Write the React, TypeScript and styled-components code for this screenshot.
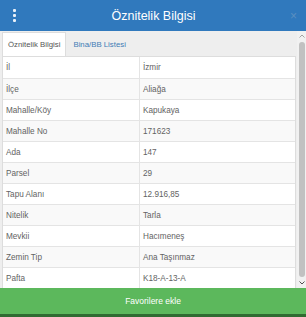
import React from "react";
import styled, { createGlobalStyle } from "styled-components";

const GlobalStyle = createGlobalStyle`
  html, body {
    margin: 0;
    padding: 0;
    background: #ffffff;
    font-family: "Liberation Sans", Arial, sans-serif;
  }
`;

const Panel = styled.div`
  width: 306px;
  height: 317px;
  display: flex;
  flex-direction: column;
  overflow: hidden;
  background: #ffffff;
`;

const Header = styled.div`
  height: 31px;
  flex: none;
  background: #3079bd;
  display: flex;
  align-items: center;
  justify-content: space-between;
  padding: 0 9px 0 11px;
  color: #ffffff;
`;

const MenuDots = styled.div`
  display: flex;
  flex-direction: column;
  gap: 2px;
  width: 6px;
  align-items: center;
  span {
    width: 3px;
    height: 3px;
    border-radius: 1px;
    background: #e9f1f9;
  }
`;

const Title = styled.div`
  font-size: 12.5px;
  color: #ffffff;
`;

const Close = styled.div`
  font-size: 12px;
  color: #5b8fc0;
  line-height: 1;
`;

const Body = styled.div`
  flex: 1;
  display: flex;
  min-height: 0;
`;

const Content = styled.div`
  flex: 1;
  display: flex;
  flex-direction: column;
  background: #eeeeee;
`;

const Tabs = styled.div`
  height: 25px;
  flex: none;
  display: flex;
  align-items: flex-end;
  padding-left: 2px;
`;

const Tab = styled.div<{ $active?: boolean }>`
  height: 23px;
  display: flex;
  align-items: center;
  padding: 0 5px;
  font-size: 7.8px;
  color: ${(p) => (p.$active ? "#555555" : "#3f7cb5")};
  background: ${(p) => (p.$active ? "#ffffff" : "transparent")};
  border: 1px solid ${(p) => (p.$active ? "#dddddd" : "transparent")};
  border-bottom: none;
  margin-right: 1px;
`;

const Table = styled.div`
  flex: 1;
  margin: 0 1px 0 2px;
  border: 1px solid #dddddd;
  border-bottom: none;
  background: #ffffff;
  display: flex;
  flex-direction: column;
`;

const Row = styled.div<{ $striped: boolean }>`
  display: grid;
  grid-template-columns: 136px 1fr;
  height: 21px;
  flex: none;
  background: ${(p) => (p.$striped ? "#f9f9f9" : "#ffffff")};
  border-top: 1px solid #e4e4e4;
  box-sizing: border-box;
  &:first-child {
    border-top: none;
  }
`;

const Cell = styled.div`
  display: flex;
  align-items: center;
  padding-left: 3px;
  font-size: 8.2px;
  color: #636363;
  & + & {
    border-left: 1px solid #e4e4e4;
  }
`;

const Scroll = styled.div`
  width: 9px;
  flex: none;
  background: #f1f1f1;
  display: flex;
  flex-direction: column;
  align-items: center;
  padding: 1px 0;
  box-sizing: border-box;
`;

const Arrow = styled.div`
  height: 8px;
  display: flex;
  align-items: center;
  justify-content: center;
  flex: none;
`;

const Thumb = styled.div`
  flex: 1;
  width: 6px;
  margin: 2px 0;
  background: #c1c1c1;
  border-radius: 3px;
`;

const Footer = styled.button`
  height: 29px;
  flex: none;
  border: none;
  border-bottom: 3px solid #2f6b31;
  background: #5cb85c;
  color: #ffffff;
  font-family: "Liberation Sans", Arial, sans-serif;
  font-size: 8.5px;
  padding: 0;
  width: 100%;
  cursor: pointer;
`;

const rows: [string, string][] = [
  ["İl", "İzmir"],
  ["İlçe", "Aliağa"],
  ["Mahalle/Köy", "Kapukaya"],
  ["Mahalle No", "171623"],
  ["Ada", "147"],
  ["Parsel", "29"],
  ["Tapu Alanı", "12.916,85"],
  ["Nitelik", "Tarla"],
  ["Mevkii", "Hacımeneş"],
  ["Zemin Tip", "Ana Taşınmaz"],
  ["Pafta", "K18-A-13-A"],
];

const App = () => {
  return (
    <>
      <GlobalStyle />
      <Panel>
        <Header>
          <MenuDots>
            <span />
            <span />
            <span />
          </MenuDots>
          <Title>Öznitelik Bilgisi</Title>
          <Close>×</Close>
        </Header>
        <Body>
          <Content>
            <Tabs>
              <Tab $active>Öznitelik Bilgisi</Tab>
              <Tab>Bina/BB Listesi</Tab>
            </Tabs>
            <Table>
              {rows.map(([label, value], i) => (
                <Row key={label} $striped={i % 2 === 1}>
                  <Cell>{label}</Cell>
                  <Cell>{value}</Cell>
                </Row>
              ))}
            </Table>
          </Content>
          <Scroll>
            <Arrow>
              <svg width="6" height="4" viewBox="0 0 6 4">
                <path d="M0.5 3.5 L3 1 L5.5 3.5" fill="none" stroke="#a3a3a3" strokeWidth="1" />
              </svg>
            </Arrow>
            <Thumb />
            <Arrow>
              <svg width="6" height="4" viewBox="0 0 6 4">
                <path d="M0.5 0.5 L3 3 L5.5 0.5" fill="none" stroke="#505050" strokeWidth="1" />
              </svg>
            </Arrow>
          </Scroll>
        </Body>
        <Footer>Favorilere ekle</Footer>
      </Panel>
    </>
  );
};

export default App;
